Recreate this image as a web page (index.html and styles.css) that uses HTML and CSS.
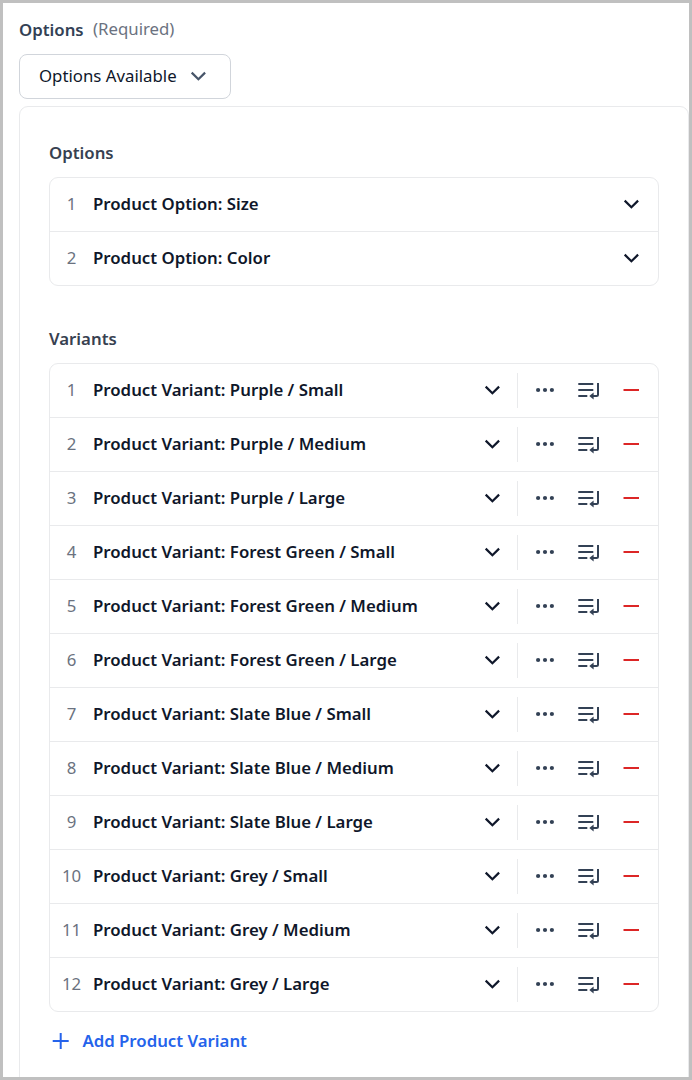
FILE: index.html
```html
<!DOCTYPE html>
<html lang="en">
<head>
<meta charset="utf-8">
<title>Product options</title>
<link rel="stylesheet" href="styles.css">
</head>
<body>
<svg class="sprite" aria-hidden="true">
  <symbol id="chevron" viewBox="0 0 24 25"><path d="M5.700 8.600 12.400 15.200l6.700-6.600" fill="none" stroke="currentColor" stroke-width="2.200"/></symbol>
  <symbol id="dots" viewBox="0 0 24 25"><g fill="currentColor"><circle cx="5.100" cy="12" r="2.100"/><circle cx="12" cy="12" r="2.100"/><circle cx="18.900" cy="12" r="2.100"/></g></symbol>
  <symbol id="insert" viewBox="0 0 24 25"><g fill="none" stroke="currentColor" stroke-width="2"><path d="M2.300 6h15M2.300 12h15M2.300 18h9"/><path d="M22 5v11.500q0 1.500-1.500 1.500H15"/></g><path d="M13.300 18 17.600 14.400v7.200z" fill="currentColor"/></symbol>
  <symbol id="minus" viewBox="0 0 24 25"><path d="M4.500 12h15.500" stroke="currentColor" stroke-width="2"/></symbol>
  <symbol id="plus" viewBox="0 0 24 25"><path d="M3.700 11h16M11.700 3v16" stroke="currentColor" stroke-width="2"/></symbol>
</svg>
<main class="frame">
  <div class="field-label"><span class="title">Options</span><span class="required">(Required)</span></div>
  <button class="select"><span class="value">Options Available</span><svg class="icon"><use href="#chevron"/></svg></button>
  <div class="panel">
    <h2 class="heading">Options</h2>
    <div class="list">
      <div class="row"><span class="num">1</span><span class="name">Product Option: Size</span><svg class="icon end"><use href="#chevron"/></svg></div>
      <div class="row"><span class="num">2</span><span class="name">Product Option: Color</span><svg class="icon end"><use href="#chevron"/></svg></div>
    </div>
    <h2 class="heading variants">Variants</h2>
    <div class="list">
      <div class="row"><span class="num">1</span><span class="name">Product Variant: Purple / Small</span><svg class="icon toggle"><use href="#chevron"/></svg><div class="actions"><svg class="icon"><use href="#dots"/></svg><svg class="icon"><use href="#insert"/></svg><svg class="icon remove"><use href="#minus"/></svg></div></div>
      <div class="row"><span class="num">2</span><span class="name">Product Variant: Purple / Medium</span><svg class="icon toggle"><use href="#chevron"/></svg><div class="actions"><svg class="icon"><use href="#dots"/></svg><svg class="icon"><use href="#insert"/></svg><svg class="icon remove"><use href="#minus"/></svg></div></div>
      <div class="row"><span class="num">3</span><span class="name">Product Variant: Purple / Large</span><svg class="icon toggle"><use href="#chevron"/></svg><div class="actions"><svg class="icon"><use href="#dots"/></svg><svg class="icon"><use href="#insert"/></svg><svg class="icon remove"><use href="#minus"/></svg></div></div>
      <div class="row"><span class="num">4</span><span class="name">Product Variant: Forest Green / Small</span><svg class="icon toggle"><use href="#chevron"/></svg><div class="actions"><svg class="icon"><use href="#dots"/></svg><svg class="icon"><use href="#insert"/></svg><svg class="icon remove"><use href="#minus"/></svg></div></div>
      <div class="row"><span class="num">5</span><span class="name">Product Variant: Forest Green / Medium</span><svg class="icon toggle"><use href="#chevron"/></svg><div class="actions"><svg class="icon"><use href="#dots"/></svg><svg class="icon"><use href="#insert"/></svg><svg class="icon remove"><use href="#minus"/></svg></div></div>
      <div class="row"><span class="num">6</span><span class="name">Product Variant: Forest Green / Large</span><svg class="icon toggle"><use href="#chevron"/></svg><div class="actions"><svg class="icon"><use href="#dots"/></svg><svg class="icon"><use href="#insert"/></svg><svg class="icon remove"><use href="#minus"/></svg></div></div>
      <div class="row"><span class="num">7</span><span class="name">Product Variant: Slate Blue / Small</span><svg class="icon toggle"><use href="#chevron"/></svg><div class="actions"><svg class="icon"><use href="#dots"/></svg><svg class="icon"><use href="#insert"/></svg><svg class="icon remove"><use href="#minus"/></svg></div></div>
      <div class="row"><span class="num">8</span><span class="name">Product Variant: Slate Blue / Medium</span><svg class="icon toggle"><use href="#chevron"/></svg><div class="actions"><svg class="icon"><use href="#dots"/></svg><svg class="icon"><use href="#insert"/></svg><svg class="icon remove"><use href="#minus"/></svg></div></div>
      <div class="row"><span class="num">9</span><span class="name">Product Variant: Slate Blue / Large</span><svg class="icon toggle"><use href="#chevron"/></svg><div class="actions"><svg class="icon"><use href="#dots"/></svg><svg class="icon"><use href="#insert"/></svg><svg class="icon remove"><use href="#minus"/></svg></div></div>
      <div class="row"><span class="num">10</span><span class="name">Product Variant: Grey / Small</span><svg class="icon toggle"><use href="#chevron"/></svg><div class="actions"><svg class="icon"><use href="#dots"/></svg><svg class="icon"><use href="#insert"/></svg><svg class="icon remove"><use href="#minus"/></svg></div></div>
      <div class="row"><span class="num">11</span><span class="name">Product Variant: Grey / Medium</span><svg class="icon toggle"><use href="#chevron"/></svg><div class="actions"><svg class="icon"><use href="#dots"/></svg><svg class="icon"><use href="#insert"/></svg><svg class="icon remove"><use href="#minus"/></svg></div></div>
      <div class="row"><span class="num">12</span><span class="name">Product Variant: Grey / Large</span><svg class="icon toggle"><use href="#chevron"/></svg><div class="actions"><svg class="icon"><use href="#dots"/></svg><svg class="icon"><use href="#insert"/></svg><svg class="icon remove"><use href="#minus"/></svg></div></div>
    </div>
    <div class="add"><svg class="icon"><use href="#plus"/></svg><span class="add-label">Add Product Variant</span></div>
  </div>
</main>
</body>
</html>
```
FILE: styles.css
```css
* { box-sizing: border-box; }
body {
  margin: 0;
  background: #fff;
  color: #0f172a;
  font: 16.8px/24px "Noto Sans", sans-serif;
}
.sprite { display: none; }
.frame {
  height: 1080px;
  overflow: hidden;
  border: 3px solid #c0c0c0;
  padding: 14px 0 0 16px;
}
.field-label { display: flex; gap: 9.400px; height: 24px; color: #334155; }
.title { font-weight: 600; padding-top: 1px; }
.required { color: #6b7280; }
.icon { display: block; flex: none; width: 24px; height: 25px; }
.select {
  display: flex;
  align-items: center;
  gap: 9px;
  width: 212px;
  height: 45px;
  margin-top: 13px;
  padding: 0 19px;
  border: 1px solid #d1d5db;
  border-radius: 8px;
  background: #fff;
  color: #0f172a;
  font: inherit;
}
.value { padding-bottom: 2px; white-space: nowrap; }
.select .icon { color: #475569; }
.panel {
  height: 1000px;
  margin-top: 7px;
  padding: 34px 29px 0;
  border: 1px solid #e9eaec;
  border-radius: 9px;
}
.heading { margin: 0 0 12px; font-size: 16.8px; line-height: 24px; font-weight: 600; color: #374151; }
.variants { margin-top: 41px; }
.list { border: 1px solid #e9eaec; border-radius: 9px; }
.row { display: flex; align-items: center; height: 53px; }
.row + .row { height: 54px; border-top: 1px solid #e9eaec; }
.num { width: 43px; padding-bottom: 2px; text-align: center; color: #6b7280; }
.name { flex: 1; padding-bottom: 2px; font-weight: 600; }
.end { margin-right: 15px; }
.toggle { margin-right: 13px; }
.actions {
  display: flex;
  align-items: center;
  gap: 19px;
  height: 35px;
  padding: 0 15px;
  border-left: 1px solid #e9eaec;
  color: #334155;
}
.remove { color: #dc2626; }
.add { display: flex; align-items: center; gap: 9.400px; margin-top: 17px; color: #2563eb; font-weight: 600; }
.add-label { padding-bottom: 2px; }
```
